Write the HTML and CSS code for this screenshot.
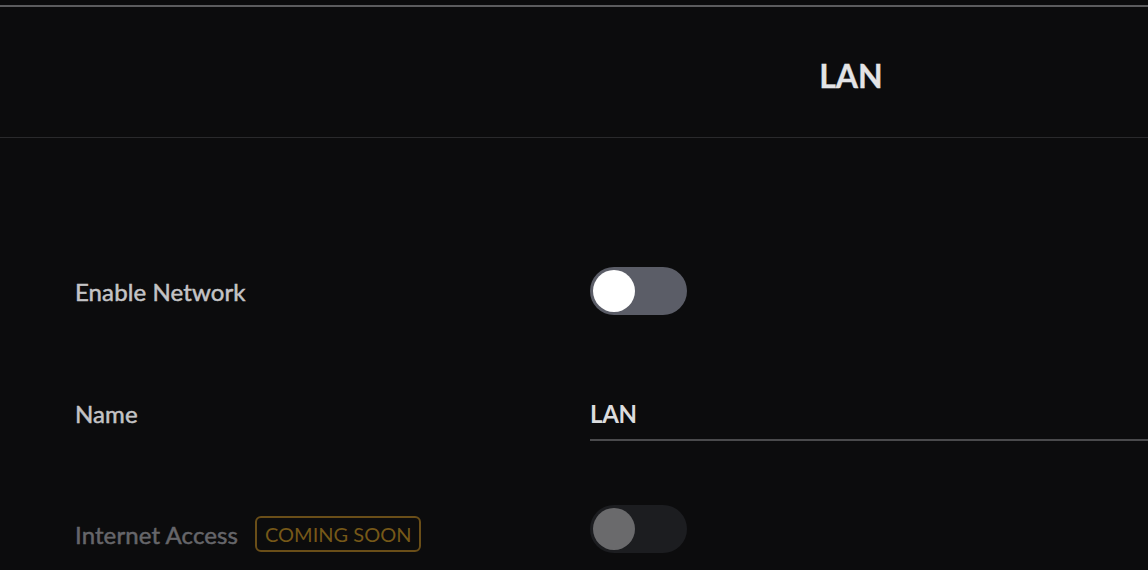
FILE: index.html
```html
<!DOCTYPE html>
<html>
<head>
<meta charset="utf-8">
<link rel="stylesheet" href="styles.css">
</head>
<body>
<div class="page">
  <div class="topbar"></div>
  <header class="header"><h1 class="title">LAN</h1></header>
  <form class="form">
    <div class="row">
      <div class="label">Enable Network</div>
      <div class="control"><span class="toggle"><span class="knob"></span></span></div>
    </div>
    <div class="row">
      <div class="label">Name</div>
      <div class="control"><div class="input">LAN</div></div>
    </div>
    <div class="row disabled">
      <div class="label">Internet Access <span class="badge">COMING SOON</span></div>
      <div class="control"><span class="toggle off"><span class="knob"></span></span></div>
    </div>
  </form>
</div>
</body>
</html>
```
FILE: styles.css
```css
html, body {
  margin: 0;
  padding: 0;
  background: #0c0c0d;
  overflow: hidden;
}
.page {
  width: 1702px;
  font-family: Lato, "Open Sans", sans-serif;
  color: #c4c4c6;
}
.topbar {
  height: 5px;
  border-bottom: 2px solid #5c5c5e;
}
.header {
  height: 131px;
  box-sizing: border-box;
  padding-top: 6px;
  border-bottom: 1px solid #2a2a2c;
  display: flex;
  align-items: center;
  justify-content: center;
}
.title {
  margin: 0;
  font-size: 32px;
  font-weight: 700;
  color: #e4e4e6;
  -webkit-text-stroke: 0.3px #e4e4e6;
}
.form {
  padding: 129px 0 0 75px;
  display: flex;
  flex-direction: column;
  gap: 71px;
}
.row {
  display: grid;
  grid-template-columns: 515px 1fr;
  align-items: center;
  height: 48px;
}
.label {
  font-size: 24px;
  letter-spacing: 0.1px;
  display: flex;
  align-items: center;
  gap: 17px;
  -webkit-text-stroke: 0.5px #c4c4c6;
}
.toggle {
  display: flex;
  align-items: center;
  width: 97px;
  height: 48px;
  border-radius: 24px;
  background: #5b5d67;
  box-sizing: border-box;
  padding: 0 3px;
}
.knob {
  width: 42px;
  height: 42px;
  border-radius: 50%;
  background: #ffffff;
}
.toggle.off {
  background: #1c1d20;
}
.toggle.off .knob {
  background: #6a6a6c;
}
.input {
  font-size: 24px;
  font-weight: 700;
  letter-spacing: -0.3px;
  color: #dcdcde;
  padding: 10px 0 11px;
  border-bottom: 2px solid #4a4a4c;
  margin-top: 3px;
}
.disabled .label {
  color: #66666a;
  -webkit-text-stroke: 0.5px #66666a;
  padding-top: 10px;
}
.badge {
  font-size: 20px;
  letter-spacing: 0;
  color: #765818;
  -webkit-text-stroke: 0;
  border: 2px solid #6a4e18;
  border-radius: 6px;
  padding: 4px 8px;
  line-height: 1.2;
}
```
